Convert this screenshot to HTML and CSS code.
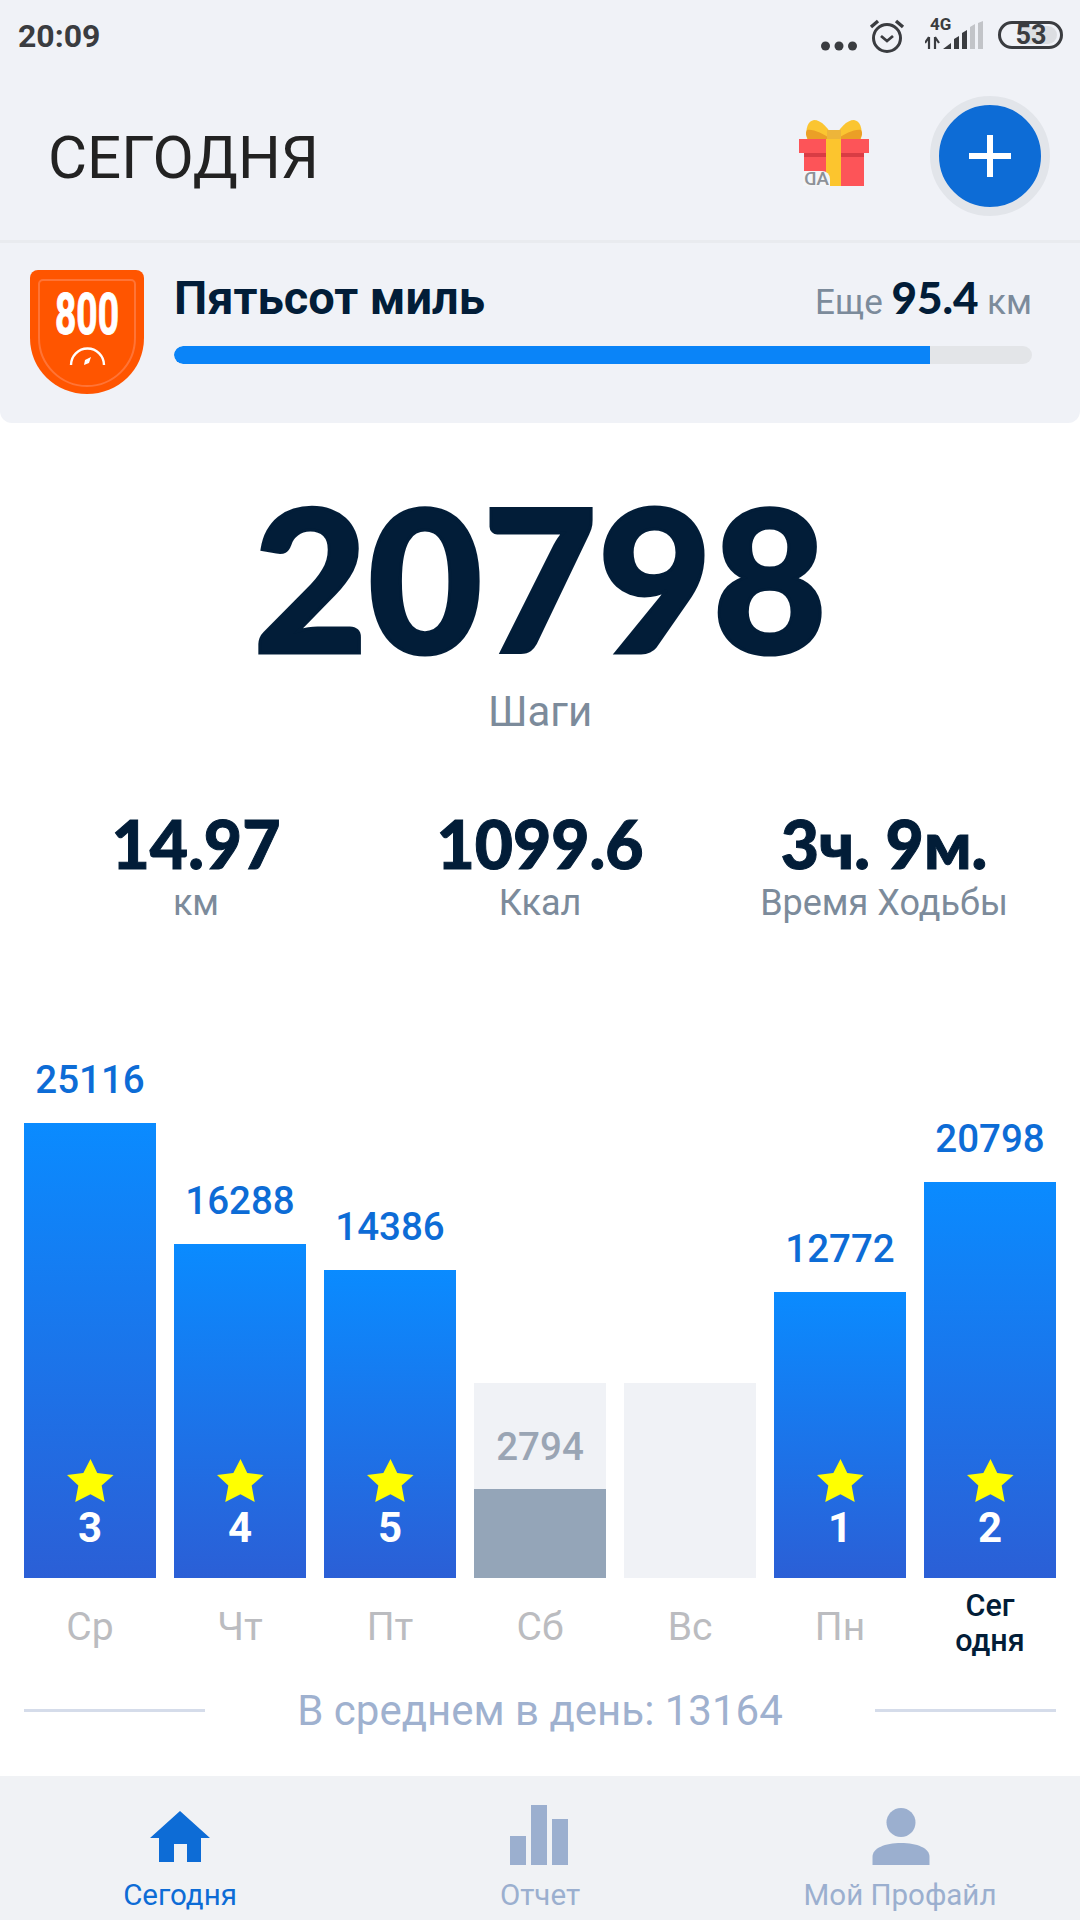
FILE: index.html
```html
<!DOCTYPE html>
<html lang="ru">
<head>
<meta charset="utf-8">
<title>Сегодня</title>
<link rel="stylesheet" href="styles.css">
</head>
<body>
<div class="app">
  <div class="status">
    <span class="time">20:09</span>
    <div class="status-icons">
      <svg class="dots" width="36" height="10" viewBox="0 0 36 10"><circle cx="4.500" cy="5" r="4.500"/><circle cx="18" cy="5" r="4.500"/><circle cx="31.500" cy="5" r="4.500"/></svg>
      <svg class="alarm" width="36" height="36" viewBox="0 0 36 36" fill="none" stroke="#3a3c40"><circle cx="18" cy="20" r="13.500" stroke-width="3"/><path d="M12 18l6 5 6-5" stroke-width="2.800"/><path d="M2 9L9 3M34 9L27 3" stroke-width="3.400"/></svg>
      <div class="net">
        <span class="net-label">4G</span>
        <svg width="58" height="30" viewBox="0 0 58 30"><path d="M4 29V17M4 17 0 23M10 29V17M10 17l4 6" stroke="#3a3c40" stroke-width="2.200" fill="none" transform="translate(0 -1)"/><path d="M18 28l8-6v6zM29 28V18l5-3V28zM37 28V12l5-3V28z" fill="#3a3c40"/><path d="M45 28V6l5-3V28zM53 28V2l5-2V28z" fill="#c2c4c8"/></svg>
      </div>
      <div class="battery"><span class="battery-fill"></span><span class="battery-num">53</span></div>
    </div>
  </div>

  <header class="header">
    <h1 class="title">СЕГОДНЯ</h1>
    <div class="gift">
      <svg width="70" height="66" viewBox="0 0 70 66">
        <path d="M35 19C30 8 22 0 15 0 9 1 6 8 8 19z" fill="#fbc531"/>
        <path d="M35 19C40 8 48 0 55 0 61 1 64 8 62 19z" fill="#fbc531"/>
        <path d="M32 19C24 14 15 9 8 10 6 13 7 16 9 19zM38 19C46 14 55 9 62 10 64 13 63 16 61 19z" fill="#eb9f26"/>
        <rect x="28" y="10" width="14" height="9" fill="#edb53a"/>
        <rect x="0" y="19" width="70" height="14" fill="#fd5458"/>
        <rect x="5" y="33" width="60" height="33" fill="#fd5458"/>
        <rect x="5" y="33" width="60" height="4" fill="#d93c44"/>
        <rect x="27" y="19" width="15" height="47" fill="#fcc52e"/>
      </svg>
      <span class="ad"><span class="ad-text">AD</span></span>
    </div>
    <button class="add" type="button" aria-label="Добавить">
      <svg width="42" height="42" viewBox="0 0 42 42"><path d="M21 0v42M0 21h42" stroke="#fff" stroke-width="6"/></svg>
    </button>
  </header>

  <section class="goal">
    <svg class="badge" width="114" height="125" viewBox="0 0 114 125">
      <path d="M8 0H106a8 8 0 0 1 8 8V68C114 100 88 124 57 124S0 100 0 68V8A8 8 0 0 1 8 0Z" fill="#ff5500"/>
      <path d="M13 10H101a4 4 0 0 1 4 4V68C105 95 83 116 57 116S9 95 9 68V14A4 4 0 0 1 13 10Z" fill="none" stroke="#ff7436" stroke-width="2"/>
      <text class="badge-text" x="57" y="64" text-anchor="middle" textLength="64" lengthAdjust="spacingAndGlyphs">800</text>
      <path d="M41 95a16.500 16.500 0 0 1 33 0" fill="none" stroke="#fff" stroke-width="2.400"/>
      <path d="M61 87l-2 6-5 2 1-5z" fill="#fff"/>
    </svg>
    <div class="goal-body">
      <div class="goal-head">
        <span class="goal-name">Пятьсот миль</span>
        <span class="goal-left">Еще <b>95.4</b> км</span>
      </div>
      <div class="track"><div class="fill" style="width:88.1%"></div></div>
    </div>
  </section>

  <main class="main">
    <div class="steps">20798</div>
    <div class="steps-label">Шаги</div>
    <div class="stats">
      <div class="stat"><div class="stat-num">14.97</div><div class="stat-label">км</div></div>
      <div class="stat"><div class="stat-num">1099.6</div><div class="stat-label">Ккал</div></div>
      <div class="stat"><div class="stat-num">3ч. 9м.</div><div class="stat-label">Время Ходьбы</div></div>
    </div>

    <div class="chart">
      <div class="col"><div class="val">25116</div><div class="bar" style="height:455px"><svg class="star" viewBox="0 0 46 42"><path d="M23 0l6.600 13.600 16 2-11.700 10.400 3 16L23 34.500 8.100 42l3-16L0 15.600l16-2z"/></svg><span class="rank">3</span></div><div class="day">Ср</div></div>
      <div class="col"><div class="val">16288</div><div class="bar" style="height:334px"><svg class="star" viewBox="0 0 46 42"><path d="M23 0l6.600 13.600 16 2-11.700 10.400 3 16L23 34.500 8.100 42l3-16L0 15.600l16-2z"/></svg><span class="rank">4</span></div><div class="day">Чт</div></div>
      <div class="col"><div class="val">14386</div><div class="bar" style="height:308px"><svg class="star" viewBox="0 0 46 42"><path d="M23 0l6.600 13.600 16 2-11.700 10.400 3 16L23 34.500 8.100 42l3-16L0 15.600l16-2z"/></svg><span class="rank">5</span></div><div class="day">Пт</div></div>
      <div class="col"><div class="empty"><div class="val val-muted">2794</div><div class="part" style="height:89px"></div></div><div class="day">Сб</div></div>
      <div class="col"><div class="empty"></div><div class="day">Вс</div></div>
      <div class="col"><div class="val">12772</div><div class="bar" style="height:286px"><svg class="star" viewBox="0 0 46 42"><path d="M23 0l6.600 13.600 16 2-11.700 10.400 3 16L23 34.500 8.100 42l3-16L0 15.600l16-2z"/></svg><span class="rank">1</span></div><div class="day">Пн</div></div>
      <div class="col"><div class="val">20798</div><div class="bar" style="height:396px"><svg class="star" viewBox="0 0 46 42"><path d="M23 0l6.600 13.600 16 2-11.700 10.400 3 16L23 34.500 8.100 42l3-16L0 15.600l16-2z"/></svg><span class="rank">2</span></div><div class="day day-today">Сег<br>одня</div></div>
    </div>

    <div class="avg">
      <span class="avg-line"></span>
      <span class="avg-text">В среднем в день: 13164</span>
      <span class="avg-line"></span>
    </div>
  </main>

  <nav class="nav">
    <div class="tab tab-active">
      <svg width="60" height="60" viewBox="0 0 60 60"><path d="M30 6 60 33H51V57H37V39H24V57H9V33H0Z" fill="#0d6cd6"/></svg>
      <span>Сегодня</span>
    </div>
    <div class="tab">
      <svg width="60" height="60" viewBox="0 0 60 60"><path d="M0 31H16V60H0ZM21 0H37V60H21ZM42 14H58V60H42Z" fill="#9bafcf"/></svg>
      <span>Отчет</span>
    </div>
    <div class="tab">
      <svg width="60" height="60" viewBox="0 0 60 60"><ellipse cx="31" cy="17.500" rx="14.500" ry="14.500" fill="#9bafcf"/><path d="M2.500 60V52C2.500 43 15 38 31 38S59.500 43 59.500 52V60Z" fill="#9bafcf"/></svg>
      <span>Мой Профайл</span>
    </div>
  </nav>
</div>
</body>
</html>
```

FILE: styles.css
```css
* { box-sizing: border-box; }
html, body { margin: 0; padding: 0; }
body { width: 1080px; height: 1920px; overflow: hidden; background: #fff; font-family: Roboto, "Noto Sans", sans-serif; }
.app { width: 1080px; height: 1920px; display: flex; flex-direction: column; }

.status { height: 72px; background: #f0f2f7; display: flex; align-items: center; justify-content: space-between; padding: 0 17px 0 18px; color: #3a3c40; }
.time { font-size: 32px; font-weight: 700; }
.status-icons { display: flex; align-items: center; }
.dots { fill: #3a3c40; margin-top: 19px; margin-right: 12px; }
.alarm { margin-right: 20px; }
.net { width: 58px; height: 32px; position: relative; margin-right: 15px; margin-top: -2px; }
.net svg { position: absolute; left: 0; bottom: 0; }
.net-label { position: absolute; left: 5px; top: -5px; font-size: 17px; line-height: 20px; font-weight: 700; }
.battery { width: 65px; height: 28px; border: 3px solid #3a3c40; border-radius: 14px; position: relative; display: flex; align-items: center; justify-content: center; margin-top: -2px; }
.battery-fill { position: absolute; right: 3px; top: 2px; bottom: 2px; width: 36px; background: #dcdee2; border-radius: 0 10px 10px 0; }
.battery-num { position: relative; font-size: 27px; font-weight: 700; line-height: 1; margin-left: 1px; }

.header { height: 171px; background: #f0f2f7; border-bottom: 3px solid #e9ebef; display: flex; align-items: center; padding: 0 30px 0 48px; }
.title { flex: 1; margin: 2px 0 0; font-size: 60px; font-weight: 400; color: #222; }
.gift { width: 70px; height: 66px; position: relative; margin-right: 61px; margin-bottom: 6px; }
.gift svg { display: block; }
.ad { position: absolute; left: 4px; bottom: 0; width: 27px; height: 15px; background: #f4f5f7; border-radius: 0 8px 0 0; display: flex; align-items: center; justify-content: center; }
.ad-text { display: block; font-size: 19px; font-weight: 500; color: #8d9197; transform: scaleX(-1); line-height: 1; }
.add { width: 120px; height: 120px; border-radius: 50%; background: #0d6cd6; border: 9px solid #e2e5ea; padding: 0; display: flex; align-items: center; justify-content: center; }

.goal { height: 180px; background: #f0f2f7; border-radius: 0 0 12px 12px; display: flex; align-items: flex-start; padding: 27px 48px 0 30px; }
.badge { flex: none; }
.badge-text { font-family: Roboto, sans-serif; font-size: 58px; font-weight: 700; fill: #fff; stroke: #fff; stroke-width: 1px; }
.goal-body { flex: 1; margin-left: 30px; }
.goal-head { display: flex; justify-content: space-between; align-items: baseline; height: 50px; }
.goal-name { font-size: 47px; font-weight: 700; color: #021d38; }
.goal-left { font-size: 35px; color: #7c8b9b; }
.goal-left b { font-family: Lato, sans-serif; font-weight: 900; font-size: 44px; color: #021d38; }
.track { height: 18px; margin-top: 26px; background: #e3e5e8; border-radius: 9px; overflow: hidden; }
.fill { height: 100%; background: #0a84f8; border-radius: 9px 0 0 9px; }

.main { flex: 1; display: flex; flex-direction: column; align-items: stretch; background: #fff; }
.steps { margin-top: 54px; text-align: center; font-family: Lato, sans-serif; font-weight: 900; font-size: 198px; line-height: 200px; color: #021d38; -webkit-text-stroke: 3px #021d38; }
.steps-label { text-align: center; font-size: 42px; line-height: 48px; color: #7c8b9b; margin-top: 11px; }
.stats { display: flex; margin-top: 73px; padding: 0 24px; }
.stat { flex: 1; text-align: center; }
.stat-num { font-family: Lato, sans-serif; font-weight: 900; font-size: 66px; line-height: 70px; color: #021d38; -webkit-text-stroke: 1px #021d38; }
.stat-label { font-size: 36px; line-height: 40px; color: #7c8b9b; margin-top: 4px; }
.chart { height: 620px; margin-top: 133px; padding: 0 24px; display: flex; gap: 18px; align-items: flex-end; }
.col { flex: 1; min-width: 0; display: flex; flex-direction: column; justify-content: flex-end; }
.val { text-align: center; font-size: 38.500px; font-weight: 500; line-height: 44px; color: #0d6cd6; margin-bottom: 21px; }
.val-muted { color: #9aa5b4; margin: 0; padding-top: 42px; }
.bar { background: linear-gradient(180deg, #0a8bff 0%, #2b5fd6 100%); display: flex; flex-direction: column; align-items: center; justify-content: flex-end; padding-bottom: 28px; }
.star { width: 47px; height: 43px; fill: #ff0; }
.rank { font-size: 42px; font-weight: 700; color: #fff; line-height: 44px; margin-top: 4px; }
.empty { height: 195px; background: #f0f2f6; display: flex; flex-direction: column; justify-content: space-between; }
.part { background: #94a5b8; }
.day { height: 98px; display: flex; align-items: center; justify-content: center; text-align: center; font-size: 39px; color: #bbbcc0; }
.day-today { font-size: 30.500px; font-weight: 500; line-height: 35px; color: #021d38; padding-bottom: 8px; }
.avg { display: flex; align-items: center; justify-content: space-between; padding: 0 24px; margin-top: 10px; }
.avg-line { width: 181px; height: 3px; background: #d5dcea; }
.avg-text { font-size: 42px; color: #9fb1cf; }

.nav { height: 144px; background: #f0f2f5; display: flex; }
.tab { flex: 1; display: flex; flex-direction: column; align-items: center; justify-content: flex-start; gap: 13px; padding-top: 29px; color: #9bafcf; font-size: 29.500px; line-height: 34px; }
.tab-active { color: #0d6cd6; }
```
